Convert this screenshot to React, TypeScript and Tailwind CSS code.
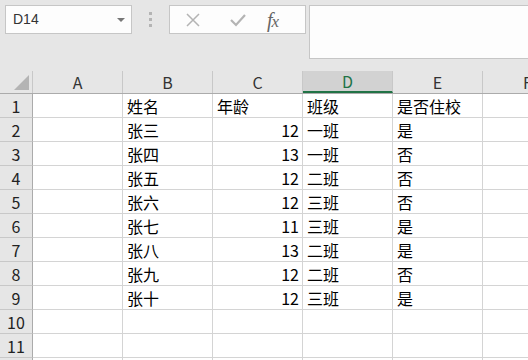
import React from 'react'

const cols = ['A', 'B', 'C', 'D', 'E', 'F']

// rows: [B, C, D, E]
const data: (string | number)[][] = [
  ['姓名', '年龄', '班级', '是否住校'],
  ['张三', 12, '一班', '是'],
  ['张四', 13, '一班', '否'],
  ['张五', 12, '二班', '否'],
  ['张六', 12, '三班', '否'],
  ['张七', 11, '三班', '是'],
  ['张八', 13, '二班', '是'],
  ['张九', 12, '二班', '否'],
  ['张十', 12, '三班', '是'],
  ['', '', '', ''],
  ['', '', '', ''],
  ['', '', '', ''],
]

const font = { fontFamily: '"Noto Sans CJK SC", "Microsoft YaHei", sans-serif' }

function Cell({ value }: { value: string | number }) {
  const isNum = typeof value === 'number'
  return (
    <div
      className={`w-[90px] shrink-0 h-full border-r border-b border-[#d4d4d4] flex items-end pb-[1px] text-[16px] leading-[20px] text-black ${
        isNum ? 'justify-end pr-[3px]' : 'pl-[4px]'
      }`}
    >
      {value}
    </div>
  )
}

export default function App() {
  return (
    <div className="w-[528px] h-[360px] overflow-hidden bg-white" style={font}>
      {/* toolbar */}
      <div className="h-[71px] bg-[#e6e6e6] flex items-start pt-[5px] pl-[5px]">
        <div className="w-[127px] h-[29px] bg-[#fdfdfd] border border-[#c6c6c6] flex items-center justify-between pl-[7px] pr-[6px]">
          <span className="text-[14px] text-[#333] font-['Liberation_Sans',sans-serif]">D14</span>
          <svg width="8" height="4" viewBox="0 0 8 4">
            <path d="M0 0 L8 0 L4 4 Z" fill="#777" />
          </svg>
        </div>
        <div className="w-[37px] h-[29px] flex flex-col items-center justify-center gap-[3px]">
          <div className="w-[3px] h-[3px] bg-[#b4b4b4]" />
          <div className="w-[3px] h-[3px] bg-[#b4b4b4]" />
          <div className="w-[3px] h-[3px] bg-[#b4b4b4]" />
        </div>
        <div className="w-[137px] h-[29px] bg-[#fdfdfd] border border-[#c6c6c6] flex items-center pl-[16px]">
          <svg width="14" height="14" viewBox="0 0 14 14">
            <path d="M1 1 L13 13 M13 1 L1 13" stroke="#b4b4b4" strokeWidth="1.5" />
          </svg>
          <svg className="ml-[30px]" width="16" height="14" viewBox="0 0 16 14">
            <path d="M1 7 L6 12 L15 2" stroke="#b4b4b4" strokeWidth="2.2" fill="none" />
          </svg>
          <span className="ml-[21px] text-[20px] italic text-[#666] font-['Liberation_Serif',serif] leading-none tracking-[-1px]">
            f<span className="text-[17px]">x</span>
          </span>
        </div>
        <div className="ml-[3px] flex-1 h-[54px] bg-[#fdfdfd] border border-[#c6c6c6] border-r-0" />
      </div>

      {/* column header */}
      <div className="h-[23px] flex bg-[#e6e6e6] border-b border-[#ababab]">
        <div className="w-[33px] shrink-0 h-full border-r border-[#c8c8c8] flex items-end justify-end pr-[3px] pb-[3px]">
          <svg width="15" height="15" viewBox="0 0 15 15">
            <path d="M15 0 L15 15 L0 15 Z" fill="#b4b4b4" />
          </svg>
        </div>
        {cols.map((c) => (
          <div
            key={c}
            className={`w-[90px] shrink-0 h-full border-r border-[#c8c8c8] flex items-center justify-center text-[16px] ${
              c === 'D' ? 'bg-[#d2d2d2] text-[#217346] border-b-2 border-b-[#217346] -mb-[1px]' : 'text-[#333]'
            }`}
          >
            {c}
          </div>
        ))}
      </div>

      {/* rows */}
      {data.map((row, i) => (
        <div key={i} className="h-[24px] flex">
          <div className="w-[33px] shrink-0 h-full bg-[#e6e6e6] border-r border-b border-[#ababab] border-b-[#c8c8c8] flex items-end justify-center pb-[1px] text-[16px] leading-[20px] text-[#222]">
            {i + 1}
          </div>
          <Cell value="" />
          {row.map((v, j) => (
            <Cell key={j} value={v} />
          ))}
          <Cell value="" />
        </div>
      ))}
    </div>
  )
}
